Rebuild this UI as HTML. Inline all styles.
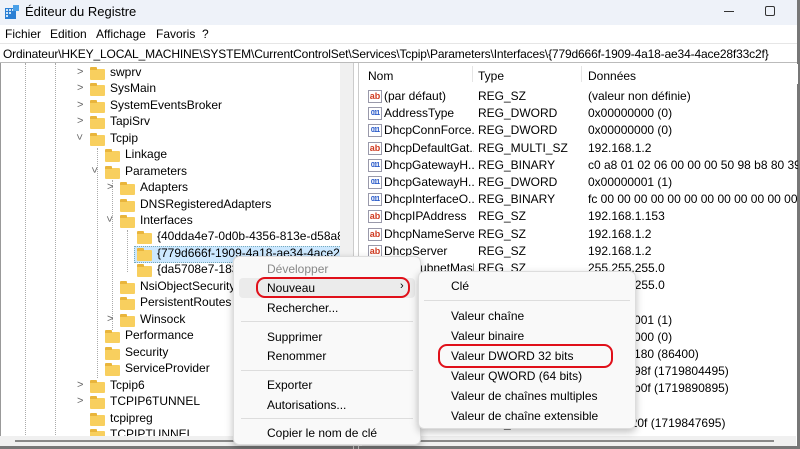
<!DOCTYPE html>
<html><head><meta charset="utf-8"><style>
*{margin:0;padding:0;box-sizing:border-box}
body{width:800px;height:449px;overflow:hidden;background:#fff;font-family:"Liberation Sans",sans-serif;font-size:12px;color:#000;position:relative}
.abs{position:absolute;white-space:nowrap}
#title{left:0;top:0;width:800px;height:25px;background:#eef2f9}
#menu{left:0;top:25px;width:800px;height:18px;background:#fff}
#addr{left:0;top:43px;width:800px;height:20px;background:#fff;border-top:1px solid #e6e6e6;border-bottom:1px solid #bbb}
.fold{position:absolute;width:15px;height:11px;background:#f8cf5e;border-radius:1px}
.fold:before{content:"";position:absolute;left:0;top:-2px;width:7px;height:3px;background:#e9b53c;border-radius:1px 1px 0 0}
.row{position:absolute;height:17px;line-height:17px;white-space:nowrap;overflow:hidden}
.chev{position:absolute;color:#666;font-size:11px}
.ic{position:absolute;width:14px;height:13px;border:1px solid #99a;font-size:9px;line-height:11px;font-weight:bold;text-align:center;background:#fff}
.ab{color:#d03a20}
.bn{color:#2456c8;font-size:7px;letter-spacing:-1px}
.menu{position:absolute;background:#f9f9f9;border:1px solid #ddd;border-radius:6px;box-shadow:0 3px 8px rgba(0,0,0,.25)}
.mi{position:absolute;white-space:nowrap}
.sep{position:absolute;height:1px;background:#ddd}
.red{position:absolute;border:2.5px solid #e0101a;border-radius:9px}
</style></head><body>
<div id="title" class="abs">
 <svg class="abs" style="left:5px;top:5px" width="14" height="14"><rect x="0" y="3" width="11" height="11" fill="#2a7fd4"/><g fill="#cfe4f8"><rect x="1" y="4" width="2" height="2"/><rect x="4" y="4" width="2" height="2"/><rect x="7" y="4" width="2" height="2"/><rect x="1" y="7" width="2" height="2"/><rect x="4" y="7" width="2" height="2"/><rect x="1" y="10" width="2" height="2"/></g><rect x="8" y="0" width="6" height="6" fill="#4aa0e8"/></svg>
 <span class="abs" style="left:25px;top:4px;font-size:13px">Éditeur du Registre</span>
 <div class="abs" style="left:724px;top:11px;width:10px;height:1px;background:#333"></div>
 <div class="abs" style="left:765px;top:6px;width:10px;height:10px;border:1px solid #333;border-radius:2px"></div>
</div>
<div id="menu" class="abs"><span class="abs" style="left:5px;top:2px">Fichier</span><span class="abs" style="left:50px;top:2px">Edition</span><span class="abs" style="left:96px;top:2px">Affichage</span><span class="abs" style="left:156px;top:2px">Favoris</span><span class="abs" style="left:202px;top:2px">?</span></div>
<div id="addr" class="abs"><span class="abs" style="left:3px;top:3px;letter-spacing:-0.15px">Ordinateur\HKEY_LOCAL_MACHINE\SYSTEM\CurrentControlSet\Services\Tcpip\Parameters\Interfaces\{779d666f-1909-4a18-ae34-4ace28f33c2f}</span></div>
<div class="abs" style="left:0;top:63px;width:1px;height:386px;background:#999"></div>
<div class="abs" style="left:797px;top:0;width:3px;height:449px;background:#777"></div>
<div class="abs" style="left:0;top:446px;width:800px;height:3px;background:#777"></div>
<!-- tree -->
<div class="abs" style="left:0;top:63px;width:340px;height:380px;overflow:hidden">
<div class="abs" style="left:25px;top:0;width:0;height:380px;border-left:1px dotted #aaa"></div>
<div class="abs" style="left:55px;top:0;width:0;height:380px;border-left:1px dotted #aaa"></div>
<div class="abs" style="left:97px;top:85px;width:0;height:230px;border-left:1px dotted #aaa"></div>
<div class="abs" style="left:112px;top:117px;width:0;height:150px;border-left:1px dotted #aaa"></div>
<div class="abs" style="left:127px;top:167px;width:0;height:42px;border-left:1px dotted #aaa"></div>
<div class="abs" style="left:134px;top:183px;width:210px;height:17px;background:#cce8ff;border:1px dotted #7ab"></div>
<div id="tree" class="abs" style="left:0;top:-63px"></div>
</div>
<div class="abs" style="left:340px;top:63px;width:13px;height:377px;background:#f0f0f0"></div>
<div class="abs" style="left:353px;top:63px;width:1px;height:386px;background:#ccc"></div>
<div class="abs" style="left:358px;top:63px;width:1px;height:386px;background:#ccc"></div>
<div class="abs" style="left:0;top:436px;width:359px;height:10px;background:#f0f0f0"></div>
<div class="abs" style="left:15px;top:440px;width:330px;height:2px;background:#888"></div>
<!-- right -->
<div class="abs" style="left:362px;top:64px;width:436px;height:20px;background:#fff"></div>
<div class="abs" style="left:472px;top:66px;width:1px;height:16px;background:#e5e5e5"></div>
<div class="abs" style="left:581px;top:66px;width:1px;height:16px;background:#e5e5e5"></div>
<span class="abs" style="left:368px;top:69px">Nom</span><span class="abs" style="left:478px;top:69px">Type</span><span class="abs" style="left:588px;top:69px">Données</span>
<div id="vals"></div>
<div class="abs" style="left:362px;top:436px;width:434px;height:10px;background:#f0f0f0"></div>
<div class="abs" style="left:420px;top:440px;width:354px;height:2px;background:#888"></div>
<!-- context menu -->
<div class="menu" style="left:233px;top:256px;width:188px;height:189px"></div>
<span class="mi" style="left:267px;top:262px;color:#888">Développer</span>
<div class="abs" style="left:239px;top:278px;width:176px;height:20px;background:#ebebeb;border-radius:4px"></div>
<span class="mi" style="left:267px;top:281px">Nouveau</span><span class="mi" style="left:400px;top:280px;font-size:11px">›</span>
<span class="mi" style="left:267px;top:301px">Rechercher...</span>
<div class="sep" style="left:241px;top:321px;width:172px"></div>
<span class="mi" style="left:267px;top:330px">Supprimer</span>
<span class="mi" style="left:267px;top:349px">Renommer</span>
<div class="sep" style="left:241px;top:370px;width:172px"></div>
<span class="mi" style="left:267px;top:378px">Exporter</span>
<span class="mi" style="left:267px;top:398px">Autorisations...</span>
<div class="sep" style="left:241px;top:418px;width:172px"></div>
<span class="mi" style="left:267px;top:426px">Copier le nom de clé</span>
<div class="red" style="left:256px;top:277px;width:154px;height:21px"></div>
<!-- submenu -->
<div class="menu" style="left:418px;top:271px;width:218px;height:158px"></div>
<span class="mi" style="left:451px;top:279px">Clé</span>
<div class="sep" style="left:424px;top:300px;width:206px"></div>
<span class="mi" style="left:451px;top:309px">Valeur chaîne</span>
<span class="mi" style="left:451px;top:329px">Valeur binaire</span>
<span class="mi" style="left:451px;top:349px">Valeur DWORD 32 bits</span>
<span class="mi" style="left:451px;top:369px">Valeur QWORD (64 bits)</span>
<span class="mi" style="left:451px;top:389px">Valeur de chaînes multiples</span>
<span class="mi" style="left:451px;top:409px">Valeur de chaîne extensible</span>
<div class="red" style="left:438px;top:344px;width:175px;height:24px"></div>
<script>
var t=[["swprv",90,1,73],["SysMain",90,1,89],["SystemEventsBroker",90,1,106],["TapiSrv",90,1,122],["Tcpip",90,2,139],["Linkage",105,0,155],["Parameters",105,2,172],["Adapters",120,1,188],["DNSRegisteredAdapters",120,0,205],["Interfaces",120,2,221],["{40dda4e7-0d0b-4356-813e-d58a8abd3",137,0,237],["{779d666f-1909-4a18-ae34-4ace28f33c",137,0,254],["{da5708e7-1837-",137,0,270],["NsiObjectSecurity",120,0,287],["PersistentRoutes",120,0,303],["Winsock",120,1,320],["Performance",105,0,336],["Security",105,0,353],["ServiceProvider",105,0,369],["Tcpip6",90,1,386],["TCPIP6TUNNEL",90,1,402],["tcpipreg",90,0,419],["TCPIPTUNNEL",90,0,435]];
var h="";t.forEach(function(r){var y=r[3]-7;h+='<div class="fold" style="left:'+r[1]+'px;top:'+(y+3)+'px"></div>';
if(r[2]==1)h+='<span class="chev" style="left:'+(r[1]-13)+'px;top:'+(y)+'px">&gt;</span>';
if(r[2]==2)h+='<span class="chev" style="left:'+(r[1]-14)+'px;top:'+(y-1)+'px;transform:rotate(90deg)">&gt;</span>';
h+='<div class="row" style="left:'+(r[1]+20)+'px;top:'+(y-2)+'px;overflow:visible">'+r[0]+'</div>';});
document.getElementById("tree").innerHTML=h;
var v=[["ab","(par défaut)","REG_SZ","(valeur non définie)"],["b","AddressType","REG_DWORD","0x00000000 (0)"],["b","DhcpConnForce...","REG_DWORD","0x00000000 (0)"],["ab","DhcpDefaultGat...","REG_MULTI_SZ","192.168.1.2"],["b","DhcpGatewayH...","REG_BINARY","c0 a8 01 02 06 00 00 00 50 98 b8 80 39 5f"],["b","DhcpGatewayH...","REG_DWORD","0x00000001 (1)"],["b","DhcpInterfaceO...","REG_BINARY","fc 00 00 00 00 00 00 00 00 00 00 00 00 00 00 00 00"],["ab","DhcpIPAddress","REG_SZ","192.168.1.153"],["ab","DhcpNameServer","REG_SZ","192.168.1.2"],["ab","DhcpServer","REG_SZ","192.168.1.2"],["ab","DhcpSubnetMask","REG_SZ","255.255.255.0"],["ab","DhcpSubnetMas...","REG_SZ","255.255.255.0"],["ab","Domain","REG_SZ",""],["b","EnableDHCP","REG_DWORD","0x00000001 (1)"],["b","IsServerNapAw...","REG_DWORD","0x00000000 (0)"],["b","Lease","REG_DWORD","0x00015180 (86400)"],["b","LeaseObtained...","REG_DWORD","0x667ed98f (1719804495)"],["b","LeaseTerminat...","REG_DWORD","0x66802b0f (1719890895)"],["ab","NameServer","REG_SZ",""],["b","T1","REG_DWORD","0x667f820f (1719847695)"]];
h="";v.forEach(function(r,i){var y=88+i*17.2;h+='<div class="ic '+(r[0]=="ab"?"ab":"bn")+'" style="left:368px;top:'+(y+2)+'px">'+(r[0]=="ab"?"ab":"011<br>")+'</div><div class="row" style="left:384px;top:'+y+'px;width:90px">'+r[1]+'</div><div class="row" style="left:478px;top:'+y+'px">'+r[2]+'</div><div class="row" style="left:588px;top:'+y+'px;width:210px">'+r[3]+'</div>';});
document.getElementById("vals").innerHTML=h;
</script>
</body></html>
